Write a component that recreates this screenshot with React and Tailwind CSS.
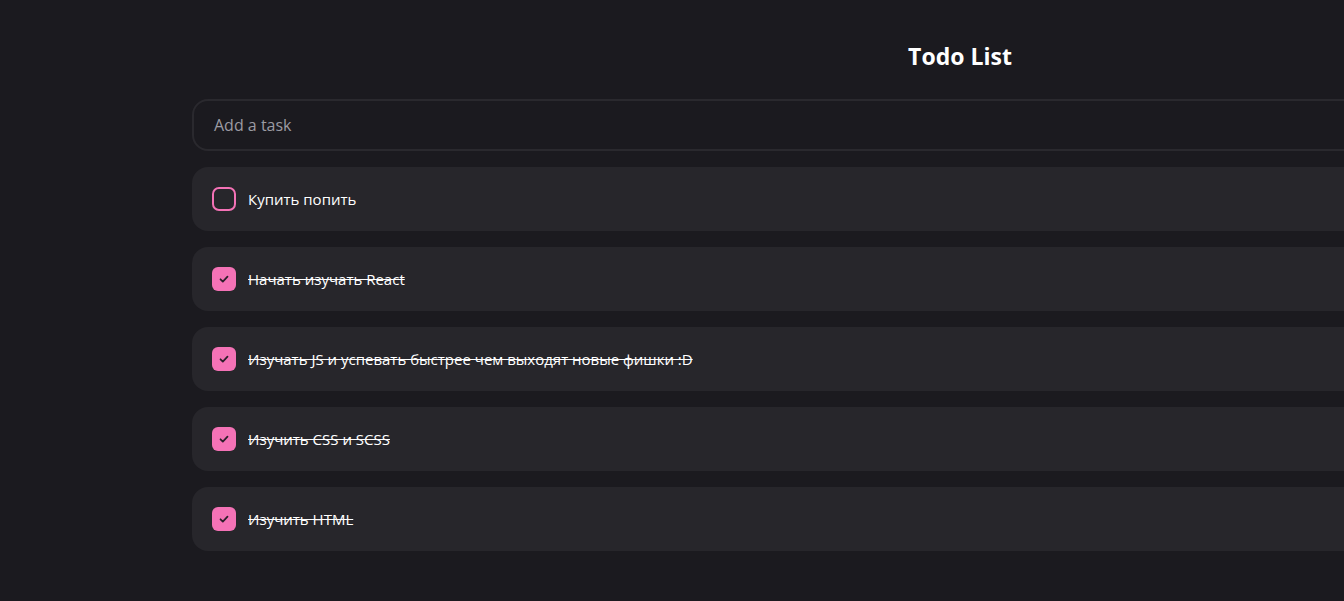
import React from "react";

const todos = [
  { text: "Купить попить", done: false },
  { text: "Начать изучать React", done: true },
  { text: "Изучать JS и успевать быстрее чем выходят новые фишки :D", done: true },
  { text: "Изучить CSS и SCSS", done: true },
  { text: "Изучить HTML", done: true },
];

function Check({ done }) {
  if (!done) {
    return <div className="w-6 h-6 rounded-[7px] border-2 border-[#f472b6] shrink-0" />;
  }
  return (
    <div className="w-6 h-6 rounded-[6px] bg-[#f472b6] shrink-0 flex items-center justify-center">
      <svg width="14" height="14" viewBox="0 0 24 24" fill="none" stroke="#2a1f2a" strokeWidth="3" strokeLinecap="round" strokeLinejoin="round">
        <path d="M6 12.5l4 4L18 8" />
      </svg>
    </div>
  );
}

export default function App() {
  return (
    <div className="h-[601px] w-full overflow-hidden bg-[#1b1a1f] font-['Open_Sans',sans-serif]">
      <div className="ml-[192px] w-[1536px] pt-10">
        <h1 className="text-center text-[23px] font-bold text-white leading-8">Todo List</h1>
        <div className="mt-[27px] h-[52px] rounded-2xl border-2 border-[#2a292e] bg-[#1b1a1f] px-5 flex items-center">
          <span className="text-base text-[#9b9ba3]">Add a task</span>
        </div>
        <div className="mt-4 flex flex-col gap-4">
          {todos.map((t, i) => (
            <div key={i} className="h-16 rounded-2xl bg-[#27262b] px-5 flex items-center gap-3">
              <Check done={t.done} />
              <span className={"text-[15px] text-white " + (t.done ? "line-through" : "")}>{t.text}</span>
            </div>
          ))}
        </div>
      </div>
    </div>
  );
}
